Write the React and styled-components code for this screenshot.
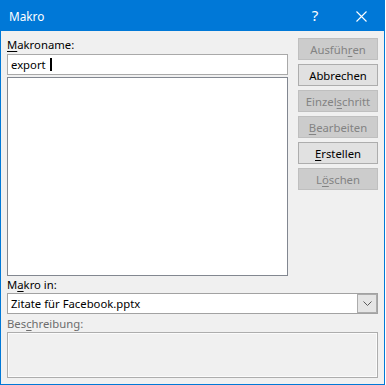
import React from "react";
import styled, { createGlobalStyle } from "styled-components";

const GlobalStyle = createGlobalStyle`
  html, body {
    margin: 0;
    padding: 0;
    background: #ffffff;
  }
  * {
    box-sizing: border-box;
  }
`;

function App() {
  return (
    <>
      <GlobalStyle />
      <Window>
        <TitleBar>
          <Title>Makro</Title>
          <TitleButton>
            <HelpGlyph>?</HelpGlyph>
          </TitleButton>
          <TitleButton>
            <svg width="11" height="11" viewBox="0 0 11 11">
              <path d="M0.5 0.5 L10.5 10.5 M10.5 0.5 L0.5 10.5" stroke="#ffffff" strokeWidth="1.1" fill="none" />
            </svg>
          </TitleButton>
        </TitleBar>

        <Body>
          <Top>
            <LeftColumn>
              <Label>
                <Key>M</Key>akroname:
              </Label>
              <TextInput>
                export<Caret />
              </TextInput>
              <ListBox />
            </LeftColumn>

            <ButtonColumn>
              <Button disabled>
                Ausfüh<Key>r</Key>en
              </Button>
              <Button>Abbrechen</Button>
              <Button disabled>
                Einzel<Key>s</Key>chritt
              </Button>
              <Button disabled>
                <Key>B</Key>earbeiten
              </Button>
              <Button>
                <Key>E</Key>rstellen
              </Button>
              <Button disabled>
                L<Key>ö</Key>schen
              </Button>
            </ButtonColumn>
          </Top>

          <Label $gap={1}>
            M<Key>a</Key>kro in:
          </Label>
          <Combo>
            <ComboText>Zitate für Facebook.pptx</ComboText>
            <DropButton>
              <svg width="9" height="5" viewBox="0 0 9 5">
                <path d="M0.5 0.5 L4.5 4.5 L8.5 0.5" stroke="#5a5a5a" strokeWidth="1" fill="none" />
              </svg>
            </DropButton>
          </Combo>

          <Label $muted $gap={2}>
            Bes<Key>c</Key>hreibung:
          </Label>
          <Description />
        </Body>
      </Window>
    </>
  );
}

export default App;

const Window = styled.div`
  width: 385px;
  height: 385px;
  border: 1px solid #0078d7;
  background: #f0f0f0;
  display: flex;
  flex-direction: column;
  font-family: "Noto Sans", "Open Sans", sans-serif;
  font-size: 11.3px;
  color: #000000;
`;

const TitleBar = styled.div`
  height: 30px;
  background: #0078d7;
  display: flex;
  align-items: center;
  padding-left: 8px;
  color: #ffffff;
`;

const Title = styled.div`
  flex: 1;
  font-size: 11.8px;
  padding-bottom: 1px;
`;

const TitleButton = styled.div`
  width: 46px;
  height: 30px;
  display: flex;
  align-items: center;
  justify-content: center;
`;

const HelpGlyph = styled.span`
  font-size: 15px;
  font-weight: 400;
  line-height: 1;
  padding-bottom: 1px;
`;

const Body = styled.div`
  flex: 1;
  display: flex;
  flex-direction: column;
  padding: 6px 5px 6px 6px;
`;

const Top = styled.div`
  flex: 1;
  display: flex;
  gap: 10px;
`;

const LeftColumn = styled.div`
  width: 281px;
  display: flex;
  flex-direction: column;
`;

const Label = styled.div`
  height: 16px;
  line-height: 16px;
  margin-top: ${(p) => (p.$gap ? `${p.$gap}px` : "0")};
  color: ${(p) => (p.$muted ? "#6d6d6d" : "#000000")};
  white-space: nowrap;
`;

const Key = styled.span`
  text-decoration: underline;
  text-underline-offset: 2px;
`;

const TextInput = styled.div`
  height: 21px;
  margin-top: 1px;
  background: #ffffff;
  border: 1px solid #a9a9a9;
  padding: 0 3px;
  display: flex;
  align-items: center;
  line-height: 1;
`;

const Caret = styled.span`
  display: inline-block;
  width: 2px;
  height: 13px;
  margin-left: 4px;
  background: #000000;
`;

const ListBox = styled.div`
  flex: 1;
  margin-top: 2px;
  background: #ffffff;
  border: 1px solid #828790;
`;

const ButtonColumn = styled.div`
  width: 80px;
  margin-top: 1px;
  display: flex;
  flex-direction: column;
  gap: 4px;
`;

const Button = styled.div`
  height: 22px;
  display: flex;
  align-items: center;
  justify-content: center;
  border: 1px solid ${(p) => (p.disabled ? "#bfbfbf" : "#adadad")};
  background: ${(p) => (p.disabled ? "#cccccc" : "#e1e1e1")};
  color: ${(p) => (p.disabled ? "#838383" : "#000000")};
  white-space: nowrap;
`;

const Combo = styled.div`
  height: 21px;
  margin-top: 0;
  margin-right: 1px;
  display: flex;
  background: #ffffff;
  border: 1px solid #a2a2a2;
`;

const ComboText = styled.div`
  flex: 1;
  display: flex;
  align-items: center;
  padding-left: 3px;
`;

const DropButton = styled.div`
  width: 20px;
  display: flex;
  align-items: center;
  justify-content: center;
  background: #e5e5e5;
  border: 1px solid #acacac;
`;

const Description = styled.div`
  height: 46px;
  margin-right: 1px;
  background: #f0f0f0;
  border: 1px solid #adadad;
  box-shadow: inset 0 0 0 1px #fbfbfb;
`;
